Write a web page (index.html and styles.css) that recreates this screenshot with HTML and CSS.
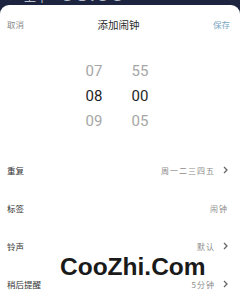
FILE: index.html
```html
<!DOCTYPE html>
<html lang="zh">
<head>
<meta charset="utf-8">
<link rel="stylesheet" href="styles.css">
</head>
<body>
<div class="backdrop"><span class="bg-ampm">上午</span><span class="bg-time">08:00</span></div>
<div class="sheet">
  <div class="header">
    <span class="cancel">取消</span>
    <span class="title">添加闹钟</span>
    <span class="save">保存</span>
  </div>
  <div class="picker">
    <div class="col">
      <div class="num">07</div>
      <div class="num sel">08</div>
      <div class="num">09</div>
    </div>
    <div class="col">
      <div class="num">55</div>
      <div class="num sel">00</div>
      <div class="num">05</div>
    </div>
  </div>
  <div class="row"><span class="label">重复</span><span class="value">周一二三四五</span><svg class="chev" viewBox="0 0 5 8" width="5" height="8"><polyline points="1,1 4,4 1,7"/></svg></div>
  <div class="row"><span class="label">标签</span><span class="value">闹钟</span></div>
  <div class="row"><span class="label">铃声</span><span class="value">默认</span><svg class="chev" viewBox="0 0 5 8" width="5" height="8"><polyline points="1,1 4,4 1,7"/></svg></div>
  <div class="row"><span class="label">稍后提醒</span><span class="value">5分钟</span><svg class="chev" viewBox="0 0 5 8" width="5" height="8"><polyline points="1,1 4,4 1,7"/></svg></div>
  <div class="watermark">CooZhi.Com</div>
</div>
</body>
</html>
```
FILE: styles.css
```css
html, body {
  margin: 0;
  padding: 0;
}
body {
  width: 240px;
  height: 296px;
  overflow: hidden;
  background: #1c2440;
  font-family: "Noto Sans CJK SC", "Noto Sans", sans-serif;
}
.backdrop {
  height: 5px;
  overflow: hidden;
  color: #b9bfcc;
  white-space: nowrap;
  padding-left: 24px;
}
.bg-ampm {
  display: inline-block;
  font-size: 12px;
  line-height: 12px;
  margin-top: -9px;
  vertical-align: top;
}
.bg-time {
  display: inline-block;
  font-family: "Roboto", sans-serif;
  font-size: 26px;
  line-height: 26px;
  margin-left: 12px;
  margin-top: -21px;
  vertical-align: top;
}
.sheet {
  position: relative;
  background: #ffffff;
  border-radius: 9px 9px 0 0;
  height: 291px;
}
.header {
  height: 38px;
  display: flex;
  align-items: center;
  justify-content: space-between;
  padding: 0 10px 0 7px;
}
.cancel {
  font-size: 8.5px;
  color: #8a8a8a;
  width: 30px;
}
.title {
  font-size: 10.5px;
  color: #2a2a2a;
}
.save {
  font-size: 8.5px;
  color: #7aa6c2;
  width: 30px;
  text-align: right;
}
.picker {
  margin-top: 16px;
  display: flex;
  justify-content: center;
  gap: 15px;
  padding-right: 6px;
  height: 75px;
}
.col {
  width: 31px;
  text-align: center;
}
.num {
  height: 25px;
  line-height: 25px;
  font-family: "Roboto", sans-serif;
  font-size: 15px;
  color: #a6a6a6;
}
.num.sel {
  color: #1f1f1f;
}
.row {
  height: 38px;
  display: flex;
  align-items: center;
  padding: 0 12px 0 7px;
}
.picker + .row {
  margin-top: 17px;
}
.label {
  font-size: 8.5px;
  color: #333333;
  flex: 1;
}
.value {
  font-size: 8px;
  letter-spacing: 1px;
  color: #8c8c8c;
}
.chev {
  margin-left: 8px;
  fill: none;
  stroke: #666666;
  stroke-width: 1.3;
}
.watermark {
  position: absolute;
  left: 60px;
  top: 248px;
  font-family: "Liberation Sans", Arial, sans-serif;
  font-weight: bold;
  font-size: 24.5px;
  color: #1a1a1a;
  line-height: 28px;
}
```
